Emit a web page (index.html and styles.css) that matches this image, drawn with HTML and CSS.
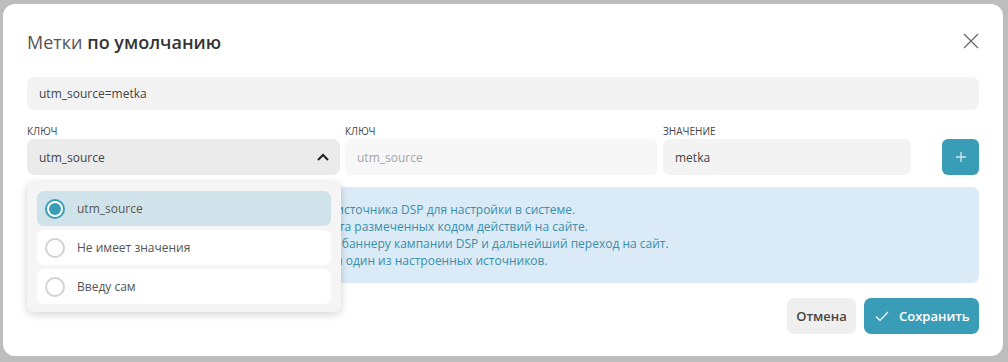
FILE: index.html
```html
<!DOCTYPE html>
<html lang="ru">
<head>
    <meta charset="UTF-8">
    <meta name="viewport" content="width=device-width, initial-scale=1.0">
    <title>Метки по умолчанию</title>
    <link rel="stylesheet" href="styles.css">
</head>
<body>
    <div class="modal">
        <div class="modal-head">
            <h1><span class="light">Метки</span> по умолчанию</h1>
            <svg class="close" width="16" height="16" viewBox="0 0 16 16">
                <path d="M1 1 L15 15 M15 1 L1 15" stroke="#666" stroke-width="1.2" fill="none"/>
            </svg>
        </div>

        <div class="field wide">utm_source=metka</div>

        <div class="row">
            <div class="col">
                <label>Ключ</label>
                <div class="select-wrap">
                    <div class="field select">
                        <span>utm_source</span>
                        <svg width="12" height="8" viewBox="0 0 12 8">
                            <path d="M1 7 L6 2 L11 7" stroke="#222" stroke-width="2" fill="none"/>
                        </svg>
                    </div>
                    <!-- open dropdown -->
                    <div class="dropdown">
                        <div class="option active">
                            <span class="radio checked"></span>utm_source
                        </div>
                        <div class="option">
                            <span class="radio"></span>Не имеет значения
                        </div>
                        <div class="option">
                            <span class="radio"></span>Введу сам
                        </div>
                    </div>
                </div>
            </div>
            <div class="col">
                <label>Ключ</label>
                <div class="field light-field placeholder">utm_source</div>
            </div>
            <div class="col">
                <label>Значение</label>
                <div class="field">metka</div>
            </div>
            <button class="add" type="button">
                <svg width="12" height="12" viewBox="0 0 12 12">
                    <path d="M6 1 V11 M1 6 H11" stroke="#cfe6ee" stroke-width="1.4" fill="none"/>
                </svg>
            </button>
        </div>

        <div class="info">
            <p>Метка utm_source используется для определения  источника DSP для настройки в системе.</p>
            <p>Значение передаётся сервису для корректного учета размеченных кодом действий на сайте.</p>
            <p>Цепочка действий пользователя включает клик по баннеру кампании DSP и дальнейший переход на сайт.</p>
            <p>Если значение метки не задано, будет использован один из настроенных источников.</p>
        </div>

        <div class="actions">
            <button class="btn cancel" type="button">Отмена</button>
            <button class="btn save" type="button">
                <svg width="14" height="11" viewBox="0 0 14 11">
                    <path d="M1 5.5 L5 9.5 L13 1" stroke="#fff" stroke-width="1.2" fill="none"/>
                </svg>
                Сохранить
            </button>
        </div>
    </div>
</body>
</html>
```

FILE: styles.css
```css
body {
    margin: 0;
    padding: 4px 5px 6px 3px;
    background: #bdbdbd;
    font-family: "Open Sans", "Noto Sans", sans-serif;
    color: #444;
}

.modal {
    background: #fff;
    border-radius: 12px;
    width: 952px;
    padding: 26px 24px 22px 24px;
}

.modal-head {
    display: flex;
    justify-content: space-between;
    align-items: flex-start;
}

h1 {
    margin: 0;
    font-size: 18px;
    line-height: 24px;
    font-weight: 600;
    color: #333;
}

h1 .light {
    font-weight: 400;
    color: #555;
}

.close {
    margin-top: 3px;
}

.field {
    background: #f3f3f3;
    border-radius: 7px;
    height: 36px;
    box-sizing: border-box;
    padding: 0 12px;
    display: flex;
    align-items: center;
    font-size: 12px;
    color: #444;
}

.field.wide {
    height: 33px;
    margin-top: 23px;
}

.row {
    display: grid;
    grid-template-columns: 313px 313px 248px 37px;
    column-gap: 5px;
    margin-top: 14px;
    align-items: end;
}

label {
    display: block;
    font-size: 10px;
    line-height: 14px;
    text-transform: uppercase;
    color: #444;
    margin-bottom: 1px;
}

.select-wrap {
    position: relative;
}

.field.select {
    background: #ebebeb;
    justify-content: space-between;
}

.field.select svg {
    margin-right: -1px;
}

.light-field {
    background: #f7f7f7;
}

.placeholder {
    color: #a5a5a5;
}

.add {
    margin-left: 26px;
    width: 37px;
    height: 36px;
    border: none;
    border-radius: 6px;
    background: #3a9db8;
    display: flex;
    align-items: center;
    justify-content: center;
    padding: 0;
}

.dropdown {
    position: absolute;
    top: 43px;
    left: 0;
    width: 314px;
    box-sizing: border-box;
    background: #f5f5f5;
    border-radius: 7px;
    padding: 9px 10px 8px 10px;
    box-shadow: 0 2px 8px rgba(0, 0, 0, 0.18);
    z-index: 2;
}

.option {
    height: 35px;
    background: #fff;
    border-radius: 7px;
    display: flex;
    align-items: center;
    font-size: 12px;
    color: #555;
    margin-bottom: 4px;
}

.option:last-child {
    margin-bottom: 0;
}

.option.active {
    background: #d1e3ea;
}

.radio {
    width: 16px;
    height: 16px;
    border: 2px solid #d2d2d2;
    border-radius: 50%;
    background: #fff;
    margin: 0 12px 0 8px;
    position: relative;
}

.radio.checked {
    border-color: #3a9db8;
}

.radio.checked::after {
    content: "";
    position: absolute;
    top: 2px;
    left: 2px;
    width: 12px;
    height: 12px;
    border-radius: 50%;
    background: #3a9db8;
}

.info {
    margin-top: 12px;
    background: #daeaf6;
    border-radius: 7px;
    padding: 14px 12px;
    height: 96px;
    box-sizing: border-box;
    color: #3a8fa9;
    font-size: 12px;
    line-height: 17px;
}

.info p {
    margin: 0;
    white-space: pre;
}

.actions {
    display: flex;
    justify-content: flex-end;
    gap: 8px;
    margin-top: 15px;
}

.btn {
    height: 36px;
    border: none;
    border-radius: 7px;
    font-family: inherit;
    font-size: 13px;
    font-weight: 600;
    display: flex;
    align-items: center;
}

.cancel {
    width: 69px;
    justify-content: center;
    background: #efefef;
    color: #444;
}

.save {
    width: 115px;
    background: #3a9db8;
    color: #fff;
    padding: 0 0 0 11px;
    gap: 10px;
}
```
